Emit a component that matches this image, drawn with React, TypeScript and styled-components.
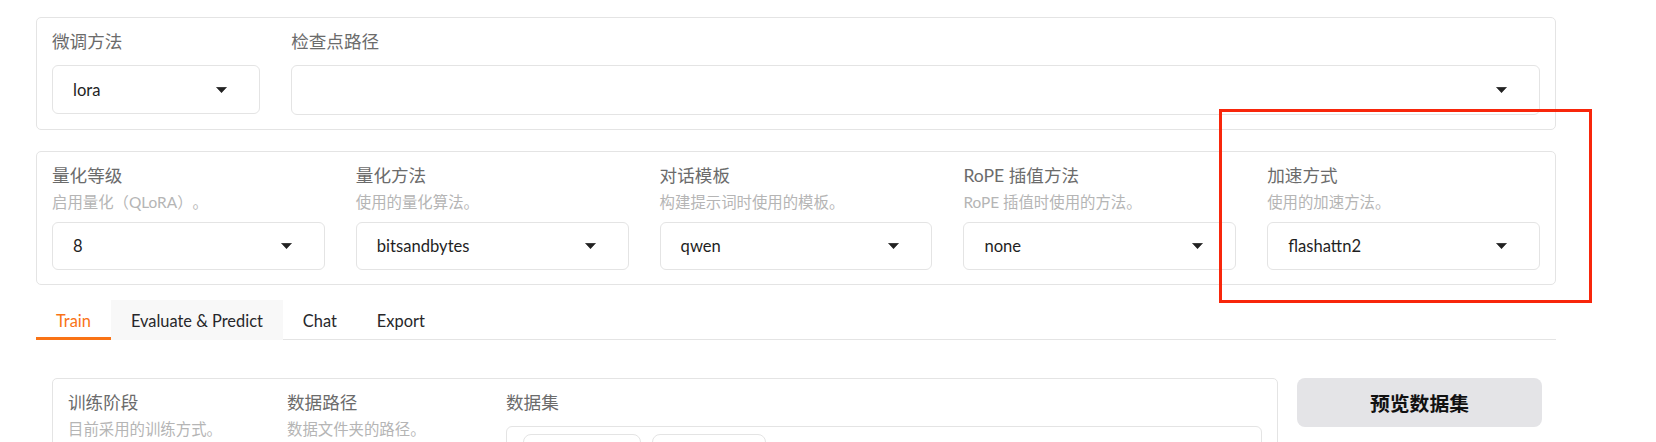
import styled, { createGlobalStyle } from "styled-components";

const GlobalStyle = createGlobalStyle`
  html, body {
    margin: 0;
    background: #ffffff;
  }
  body {
    font-family: "Source Sans Pro", Lato, "Noto Sans CJK SC", sans-serif;
    color: #1f1f1f;
    text-spacing-trim: space-all;
  }
`;

type FieldData = { label: string; info?: string; value?: string };

const topFields: FieldData[] = [
  { label: "量化等级", info: "启用量化（QLoRA）。", value: "8" },
  { label: "量化方法", info: "使用的量化算法。", value: "bitsandbytes" },
  { label: "对话模板", info: "构建提示词时使用的模板。", value: "qwen" },
  { label: "RoPE 插值方法", info: "RoPE 插值时使用的方法。", value: "none" },
  { label: "加速方式", info: "使用的加速方法。", value: "flashattn2" },
];

const tabs = ["Train", "Evaluate & Predict", "Chat", "Export"];

function Arrow() {
  return (
    <svg width="11" height="6" viewBox="0 0 11 6">
      <path d="M0.5 0.3 H10.5 L5.5 5.7 Z" fill="#222" stroke="#222" strokeWidth="0.6" strokeLinejoin="round" />
    </svg>
  );
}

function Dropdown({ value, height = 48 }: { value?: string; height?: number }) {
  return (
    <Select $h={height}>
      <SelectValue>{value}</SelectValue>
      <Arrow />
    </Select>
  );
}

export default function App() {
  return (
    <Page>
      <GlobalStyle />
      <Column>
        <Panel $cols="1fr 6fr" $mb={21}>
          <Field>
            <Label $gap={14}>微调方法</Label>
            <Dropdown value="lora" height={49} />
          </Field>
          <Field>
            <Label $gap={14}>检查点路径</Label>
            <Dropdown height={50} />
          </Field>
        </Panel>

        <Panel $cols="repeat(5, 1fr)" $mb={15}>
          {topFields.map((f) => (
            <Field key={f.label}>
              <Label $gap={8}>{f.label}</Label>
              <Info>{f.info}</Info>
              <Dropdown value={f.value} />
            </Field>
          ))}
        </Panel>

        <TabBar>
          {tabs.map((t, i) => (
            <Tab key={t} $active={i === 0} $hover={i === 1}>
              {t}
            </Tab>
          ))}
        </TabBar>

        <TrainRow>
          <TrainPanel>
            <Field>
              <Label $gap={8}>训练阶段</Label>
              <Info>目前采用的训练方式。</Info>
            </Field>
            <Field>
              <Label $gap={8}>数据路径</Label>
              <Info>数据文件夹的路径。</Info>
            </Field>
            <Field>
              <Label $gap={14}>数据集</Label>
              <DatasetBox>
                <Chip $w={116} />
                <Chip $w={112} />
              </DatasetBox>
            </Field>
          </TrainPanel>
          <PreviewButton>预览数据集</PreviewButton>
        </TrainRow>
      </Column>
      <Highlight />
    </Page>
  );
}

const Page = styled.div`
  position: relative;
  height: 442px;
  overflow: hidden;
  padding: 17px 0 0 36px;
  box-sizing: border-box;
`;

const Column = styled.div`
  width: 1520px;
  display: flex;
  flex-direction: column;
`;

const Panel = styled.div<{ $cols: string; $mb: number }>`
  display: grid;
  grid-template-columns: ${(p) => p.$cols};
  column-gap: 31px;
  border: 1px solid #e4e4e4;
  border-radius: 5px;
  padding: 15px 15px 14px;
  margin-bottom: ${(p) => p.$mb}px;
`;

const Field = styled.div`
  display: flex;
  flex-direction: column;
  min-width: 0;
`;

const Label = styled.span<{ $gap: number }>`
  font-size: 17.6px;
  line-height: 18px;
  color: #6b6b6b;
  margin-bottom: ${(p) => p.$gap}px;
  white-space: nowrap;
`;

const Info = styled.span`
  font-size: 15.4px;
  line-height: 18px;
  color: #b5b5b5;
  margin-bottom: 11px;
  white-space: nowrap;
`;

const Select = styled.div<{ $h: number }>`
  height: ${(p) => p.$h}px;
  box-sizing: border-box;
  border: 1px solid #e4e4e4;
  border-radius: 6px;
  display: flex;
  align-items: center;
  justify-content: space-between;
  padding: 0 32px 0 20px;
`;

const SelectValue = styled.span`
  font-size: 16.6px;
  color: #1f1f1f;
`;

const TabBar = styled.div`
  display: flex;
  border-bottom: 1px solid #e4e4e4;
  margin-bottom: 38px;
`;

const Tab = styled.div<{ $active?: boolean; $hover?: boolean }>`
  height: 40px;
  margin-bottom: -1px;
  padding: 0 20px;
  display: flex;
  align-items: center;
  font-size: 16.4px;
  color: ${(p) => (p.$active ? "#f97316" : "#27272a")};
  background: ${(p) => (p.$hover ? "#f8f8f8" : "transparent")};
  box-shadow: ${(p) => (p.$active ? "inset 0 -3px 0 #f97316" : "none")};
`;

const TrainRow = styled.div`
  display: flex;
  align-items: flex-start;
  gap: 19px;
  padding: 0 14px 0 16px;
`;

const TrainPanel = styled.div`
  flex: 1;
  display: grid;
  grid-template-columns: 1fr 1fr 4fr;
  column-gap: 30px;
  border: 1px solid #e4e4e4;
  border-radius: 5px;
  padding: 15px;
  height: 200px;
`;

const DatasetBox = styled.div`
  display: flex;
  gap: 11px;
  border: 1px solid #e4e4e4;
  border-radius: 6px;
  padding: 7px 16px;
`;

const Chip = styled.div<{ $w: number }>`
  width: ${(p) => p.$w}px;
  height: 40px;
  border: 1px solid #e4e4e4;
  border-radius: 8px;
`;

const PreviewButton = styled.button`
  width: 245px;
  height: 49px;
  border: none;
  border-radius: 8px;
  background: #e4e4e7;
  font-family: inherit;
  font-size: 19.8px;
  font-weight: 700;
  color: #111;
`;

const Highlight = styled.div`
  position: absolute;
  left: 1219px;
  top: 109px;
  width: 373px;
  height: 194px;
  box-sizing: border-box;
  border: 3px solid #f8260b;
  pointer-events: none;
`;
